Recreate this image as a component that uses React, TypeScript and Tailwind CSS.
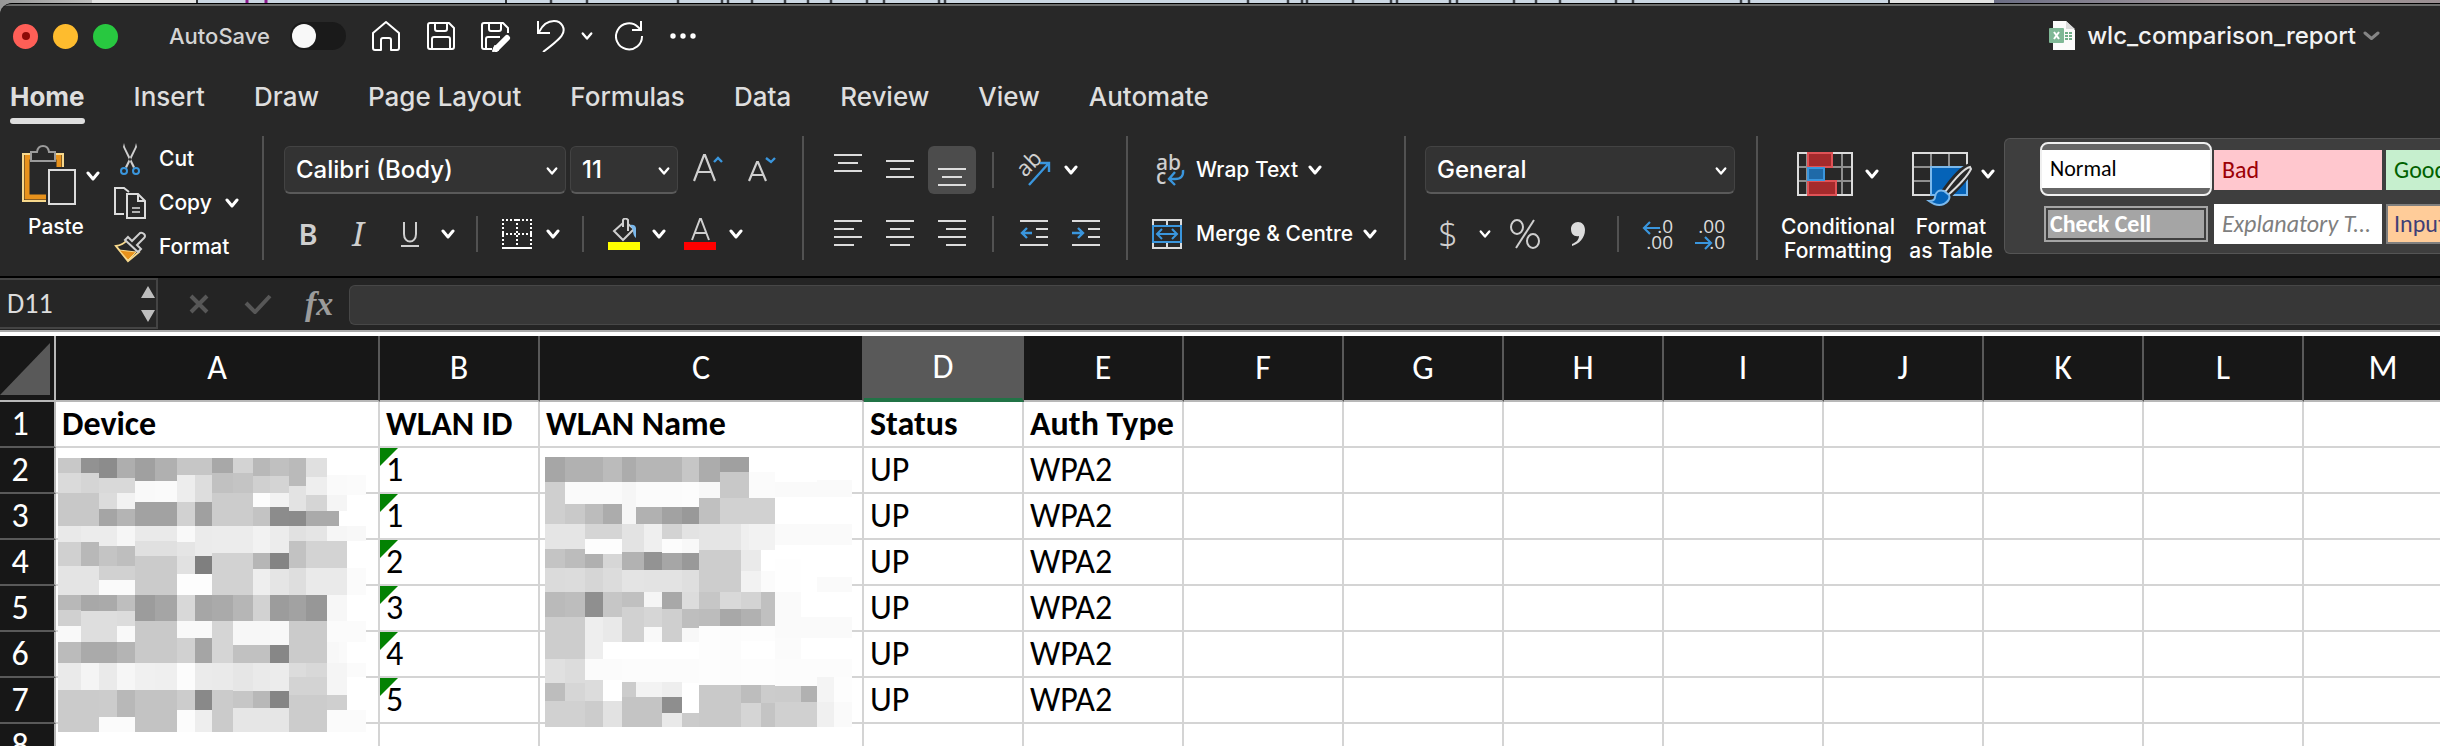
import React from 'react'

/* ---------- shared pieces ---------- */

function Chevron({ size = 'md' }: { size?: 'sm' | 'md' }) {
  return (
    <svg className={size === 'sm' ? 'h-[10px] w-[12px] shrink-0' : 'h-[10px] w-[14px] shrink-0'} viewBox="0 0 14 10" fill="none" stroke="#fff" strokeWidth={size === 'sm' ? 2.7 : 3} strokeLinecap="round" strokeLinejoin="round">
      <path d="M2 2l5 6 5-6" />
    </svg>
  )
}

function IconButton({ label, className, children }: { label: string; className: string; children: React.ReactNode }) {
  return (
    <button type="button" aria-label={label} className={`flex h-12 shrink-0 items-center justify-center ${className}`}>
      {children}
    </button>
  )
}

function Rule({ className = '' }: { className?: string }) {
  return <div className={`h-9 w-[2px] shrink-0 bg-[#525252] ${className}`} />
}

function Divider() {
  return <div className="h-[124px] w-[2px] shrink-0 bg-[#525252]" />
}

function Picker({ label, value, className }: { label: string; value: string; className: string }) {
  return (
    <div className={`relative h-12 shrink-0 ${className}`}>
      <select aria-label={label} defaultValue={value} className="h-12 w-full appearance-none rounded-md border border-b-2 border-[#434343] border-b-[#5a5a5a] bg-[#333333] pl-[11px] text-2xl font-medium text-white">
        <option>{value}</option>
      </select>
      <span className="pointer-events-none absolute top-5 right-[8px]">
        <Chevron size="sm" />
      </span>
    </div>
  )
}

function Lines({ rows, blue }: { rows: [number, number, number][]; blue?: string }) {
  return (
    <svg className="h-8 w-7" viewBox="0 0 28 32" fill="none" stroke="#dcdcdc" strokeWidth="2">
      {rows.map(([x1, x2, y]) => (
        <path key={y} d={`M${x1} ${y}H${x2}`} />
      ))}
      {blue && <path d={blue} stroke="#3a96dd" strokeWidth="2.4" />}
    </svg>
  )
}

/* ---------- title bar ---------- */

function TitleBar() {
  return (
    <header className="flex h-[60px] shrink-0 items-center pl-[13px] pr-[60px]">
      <div className="flex gap-[15px]">
        <button type="button" aria-label="Close" className="flex size-[25px] items-center justify-center rounded-full bg-[#ff5f57]">
          <span className="size-2 rounded-full bg-[#8d0a06]" />
        </button>
        <button type="button" aria-label="Minimise" className="size-[25px] rounded-full bg-[#febc2e]" />
        <button type="button" aria-label="Zoom" className="size-[25px] rounded-full bg-[#28c840]" />
      </div>
      <label className="ml-[51px] flex items-center gap-[20px] text-[22px] font-medium text-[#d4d4d4]">
        <span className="w-[101px] whitespace-nowrap">AutoSave</span>
        <span className="relative h-7 w-14 rounded-full bg-[#1a1a1a]">
          <input type="checkbox" className="absolute inset-0 appearance-none" />
          <span className="pointer-events-none absolute top-[2px] left-[2px] size-6 rounded-full bg-[#f8f8f8]" />
        </span>
      </label>
      <div className="ml-[25px] flex items-center">
        <button type="button" aria-label="Home">
          <svg className="h-8 w-[30px]" viewBox="0 0 30 32" fill="none" stroke="#fff" strokeWidth="2" strokeLinejoin="round">
            <path d="M2 13L15 2l13 11v15q0 2-2 2h-6V20q0-2-2-2h-6q-2 0-2 2v10H4q-2 0-2-2z" />
          </svg>
        </button>
        <button type="button" aria-label="Save" className="ml-[26px]">
          <svg className="h-8 w-[28px]" viewBox="0 0 28 32" fill="none" stroke="#fff" strokeWidth="2" strokeLinejoin="round">
            <path d="M3 3h19l5 5v19q0 2-2 2H3q-2 0-2-2V5q0-2 2-2z M8 3v6q0 2 2 2h8q2 0 2-2V3 M5 29V19q0-2 2-2h14q2 0 2 2v10" />
          </svg>
        </button>
        <button type="button" aria-label="Save as" className="ml-[26px]">
          <svg className="h-8 w-[31px]" viewBox="0 0 31 32" fill="none" stroke="#fff" strokeWidth="2" strokeLinejoin="round">
            <path d="M11 29H3q-2 0-2-2V5q0-2 2-2h19l5 5v5 M8 3v6q0 2 2 2h8q2 0 2-2V3 M5 29V19q0-2 2-2h12" />
            <path d="M26 18L15 29" strokeWidth="6" strokeLinecap="round" />
            <path d="M12 31l2-5 3 4z" fill="#fff" />
          </svg>
        </button>
        <button type="button" aria-label="Undo" className="ml-[25px]">
          <svg className="h-8 w-[28px]" viewBox="0 0 28 32" fill="none" stroke="#fff" strokeWidth="2">
            <path d="M1 1v12h12 M2 12C5 6 10 1 17 1c8 0 12 8 8 14-2 4-11 11-19 17" />
          </svg>
        </button>
        <button type="button" aria-label="Undo history" className="ml-[16px]">
          <Chevron size="sm" />
        </button>
        <button type="button" aria-label="Redo" className="ml-[22px]">
          <svg className="h-8 w-[29px]" viewBox="0 0 29 32" fill="none" stroke="#fff" strokeWidth="2">
            <path d="M27 16a13 13 0 1 1-4-9l3 3 M26 1v9h-9" />
          </svg>
        </button>
        <button type="button" aria-label="More" className="ml-[26px]">
          <svg className="h-2 w-[27px]" viewBox="0 0 27 8" fill="#fff">
            <circle cx="3" cy="4" r="2.700" />
            <circle cx="13" cy="4" r="2.700" />
            <circle cx="23" cy="4" r="2.700" />
          </svg>
        </button>
      </div>
      <button type="button" className="ml-auto flex items-center text-2xl font-medium text-[#f2f2f2]">
        <svg className="mr-[11px] h-[30px] w-[27px]" viewBox="0 0 27 30">
          <path d="M4 0h13l9 9v20H4z" fill="#fbfbfb" />
          <path d="M17 0v8h9z" fill="#dcdcdc" />
          <path d="M16 11h3v2h-3zM20 11h3v2h-3zM16 14h3v2h-3zM20 14h3v2h-3zM16 17h3v2h-3zM20 17h3v2h-3z" fill="#6fae88" />
          <rect y="7" width="15" height="15" rx="1" fill="#7fb896" />
          <path d="M5 11l5 7M10 11l-5 7" stroke="#fff" strokeWidth="2" />
        </svg>
        wlc_comparison_report
        <svg className="ml-[7px] h-[10px] w-[17px]" viewBox="0 0 17 10" fill="none" stroke="#858585" strokeWidth="3" strokeLinecap="round" strokeLinejoin="round">
          <path d="M2 2l6.500 5.500L15 2" />
        </svg>
      </button>
    </header>
  )
}

/* ---------- tabs ---------- */

const tabs = ['Home', 'Insert', 'Draw', 'Page Layout', 'Formulas', 'Data', 'Review', 'View', 'Automate']

function Tabs() {
  return (
    <nav className="flex h-[70px] shrink-0 gap-[49px] pt-[15px] pl-[10px] text-[26px] font-medium text-[#dedede]">
      {tabs.map((tab, i) => (
        <a key={tab} href={'#' + tab.toLowerCase().replace(' ', '-')} className={i === 0 ? 'font-bold whitespace-nowrap' : 'whitespace-nowrap'}>
          <span className="block leading-8">{tab}</span>
          {i === 0 && <span className="mt-[5px] block h-[6px] rounded-full bg-[#dedede]" />}
        </a>
      ))}
    </nav>
  )
}

/* ---------- ribbon ---------- */

function Clipboard() {
  return (
    <section className="flex w-[262px] shrink-0 items-start">
      <button type="button" className="w-[114px] pl-[22px] text-left">
        <span className="mt-2 flex h-[64px] items-center gap-[9px]">
          <svg className="h-[62px] w-[55px]" viewBox="0 0 55 62" fill="none">
            <path d="M8 12H5v40h19M34 12h3v10" stroke="#e8921c" strokeWidth="5" />
            <path d="M8 9H1v47h23M34 9h7v13" stroke="#f8d98c" strokeWidth="2" />
            <path d="M9 7h6c1-8 11-8 12 0h6v9H9z" fill="#282828" stroke="#9b9b9b" strokeWidth="2" />
            <path d="M27 25h26v34H27z" fill="#282828" stroke="#dcdcdc" strokeWidth="2" />
          </svg>
          <Chevron />
        </span>
        <span className="mt-[5px] ml-[6px] block text-[21px] leading-7 font-medium text-white">Paste</span>
      </button>
      <div className="mt-px flex flex-col text-[21px] font-medium text-white">
        <button type="button" className="flex h-11 items-center gap-[13px]">
          <svg className="h-8 w-8" viewBox="0 0 32 32" fill="none">
            <path d="M10 0l1 4 10 20-2 1L9 4z M22 0l-1 4-10 20 2 1L23 4z" fill="#cfcfcf" />
            <circle cx="10" cy="28" r="3" stroke="#3a96dd" strokeWidth="2" />
            <circle cx="22" cy="28" r="3" stroke="#3a96dd" strokeWidth="2" />
          </svg>
          Cut
        </button>
        <button type="button" className="flex h-11 items-center gap-[13px]">
          <svg className="h-8 w-8" viewBox="0 0 32 32" fill="none" stroke="#dcdcdc" strokeWidth="2">
            <path d="M10 27H1V1h9l5 4" />
            <path d="M13 7h11l7 7v17H13z M24 7v7h7" />
            <path d="M18 21h8M18 25h8" stroke="#b0b0b0" />
          </svg>
          <span className="flex items-center gap-[13px]">
            Copy
            <Chevron />
          </span>
        </button>
        <button type="button" className="flex h-11 items-center gap-[13px]">
          <svg className="h-8 w-8" viewBox="0 0 32 32" fill="none">
            <path d="M2 15q7-1 11-6l12 12-11 9z" stroke="#f8d98c" strokeWidth="2" />
            <path d="M5 19l17 2-8 8z" fill="#e8921c" stroke="#f8d98c" />
            <path d="M14 6l4 4 8-8q2-1 4 1t0 4l-7 7 4 4-3 3L11 9z" fill="#282828" stroke="#cfcfcf" strokeWidth="2" />
          </svg>
          Format
        </button>
      </div>
    </section>
  )
}

function FontGroup() {
  return (
    <section className="flex w-[538px] shrink-0 flex-col gap-4 pt-[10px] pl-5">
      <div className="flex">
        <Picker label="Font" value="Calibri (Body)" className="w-[282px]" />
        <Picker label="Font size" value="11" className="ml-1 w-[108px]" />
        <IconButton label="Increase font size" className="ml-2 w-[44px]">
          <svg className="h-8 w-[30px]" viewBox="0 0 30 32" fill="none" stroke="#cfcfcf" strokeWidth="2.200">
            <path d="M1 27L11 1h1l10 26M5 18h13" />
            <path d="M21 8l4-4 4 4" stroke="#3a96dd" strokeWidth="2.400" />
          </svg>
        </IconButton>
        <IconButton label="Decrease font size" className="ml-[10px] w-[44px]">
          <svg className="h-8 w-[28px]" viewBox="0 0 28 32" fill="none" stroke="#cfcfcf" strokeWidth="2.200">
            <path d="M1 27L9 8h1l8 19M4 21h11" />
            <path d="M18 4l5 4 4-4" stroke="#3a96dd" strokeWidth="2.400" />
          </svg>
        </IconButton>
      </div>
      <div className="flex items-center text-[#cfcfcf]">
        <IconButton label="Bold" className="w-[48px]">
          <span className="font-['Noto_Sans',sans-serif] text-[29px] leading-9 font-semibold">B</span>
        </IconButton>
        <IconButton label="Italic" className="w-[52px]">
          <span className="font-['Noto_Serif','Liberation_Serif',serif] text-[32px] leading-9 italic">I</span>
        </IconButton>
        <IconButton label="Underline" className="w-[52px]">
          <svg className="h-7 w-5" viewBox="0 0 20 28" fill="none" stroke="#cfcfcf" strokeWidth="2">
            <path d="M4 2v12c0 10 12 10 12 0V2M1 26h18" />
          </svg>
        </IconButton>
        <IconButton label="Underline options" className="w-[24px]">
          <Chevron />
        </IconButton>
        <Rule className="ml-4" />
        <IconButton label="Borders" className="ml-5 w-[38px]">
          <svg className="h-[30px] w-[30px]" viewBox="0 0 30 30" fill="none" stroke="#fff" strokeWidth="2">
            <path d="M0 1h30M1 0v28M29 0v28M0 15h30M15 0v28" strokeDasharray="2 2" />
            <path d="M0 29h30" />
          </svg>
        </IconButton>
        <IconButton label="Border options" className="w-[34px]">
          <Chevron />
        </IconButton>
        <Rule className="ml-3" />
        <IconButton label="Fill colour" className="ml-5 w-[40px]">
          <svg className="h-8 w-8" viewBox="0 0 32 32" fill="none">
            <path d="M15 5L6 13l9 9 11-11-6-5M15 9V2q2-3 5 0v11" stroke="#cfcfcf" strokeWidth="2" />
            <path d="M22 7q5-1 6 3v10q-3-2-3-8z" fill="#7ab8ec" />
            <path d="M0 24h32v8H0z" fill="#ffff00" />
          </svg>
        </IconButton>
        <IconButton label="Fill options" className="w-[30px]">
          <Chevron />
        </IconButton>
        <IconButton label="Font colour" className="ml-[6px] w-[40px]">
          <svg className="h-8 w-8" viewBox="0 0 32 32" fill="none">
            <path d="M8 22L16 1h1l8 21M11 15h11" stroke="#cfcfcf" strokeWidth="2" />
            <path d="M0 24h32v8H0z" fill="#ff0000" />
          </svg>
        </IconButton>
        <IconButton label="Font colour options" className="w-[32px]">
          <Chevron />
        </IconButton>
      </div>
    </section>
  )
}

function AlignGroup() {
  return (
    <section className="flex w-[322px] shrink-0 flex-col gap-4 pt-[10px] pl-5">
      <div className="flex items-center">
        <IconButton label="Top align" className="w-[48px]">
          <Lines rows={[[0, 28, 1], [4, 24, 9], [0, 28, 17]]} />
        </IconButton>
        <IconButton label="Middle align" className="ml-1 w-[48px]">
          <Lines rows={[[0, 28, 7], [4, 24, 15], [0, 28, 23]]} />
        </IconButton>
        <IconButton label="Bottom align" className="ml-1 w-[48px] rounded-md bg-[#4c4c4c]">
          <Lines rows={[[0, 28, 15], [4, 24, 23], [0, 28, 31]]} />
        </IconButton>
        <Rule className="ml-4" />
        <IconButton label="Orientation" className="ml-4 w-[48px]">
          <svg className="h-[34px] w-[34px] overflow-visible" viewBox="0 0 34 34" fill="none">
            <text x="8" y="25" transform="rotate(-45 8 25)" fontFamily="Noto Sans, sans-serif" fontSize="22" fill="#cfcfcf">ab</text>
            <path d="M12 32L31 11M23 10h9v9" stroke="#3a96dd" strokeWidth="2.400" />
          </svg>
        </IconButton>
        <IconButton label="Orientation options" className="w-[26px]">
          <Chevron />
        </IconButton>
      </div>
      <div className="flex items-center">
        <IconButton label="Align left" className="w-[48px]">
          <Lines rows={[[0, 28, 3], [0, 20, 11], [0, 28, 19], [0, 20, 27]]} />
        </IconButton>
        <IconButton label="Align centre" className="ml-1 w-[48px]">
          <Lines rows={[[0, 28, 3], [4, 24, 11], [0, 28, 19], [4, 24, 27]]} />
        </IconButton>
        <IconButton label="Align right" className="ml-1 w-[48px]">
          <Lines rows={[[0, 28, 3], [8, 28, 11], [0, 28, 19], [8, 28, 27]]} />
        </IconButton>
        <Rule className="ml-4" />
        <IconButton label="Decrease indent" className="ml-4 w-[48px]">
          <Lines rows={[[0, 28, 3], [16, 28, 11], [16, 28, 19], [0, 28, 27]]} blue="M12 15H2M7 10l-5 5 5 5" />
        </IconButton>
        <IconButton label="Increase indent" className="ml-1 w-[48px]">
          <Lines rows={[[0, 28, 3], [16, 28, 11], [16, 28, 19], [0, 28, 27]]} blue="M0 15h11M6 10l5 5-5 5" />
        </IconButton>
      </div>
    </section>
  )
}

function WrapGroup() {
  return (
    <section className="flex w-[276px] shrink-0 flex-col items-start gap-4 pt-[10px] pl-6 text-[21px] font-medium text-white">
      <button type="button" className="flex h-12 items-center whitespace-nowrap">
        <svg className="mr-[12px] h-[34px] w-8 overflow-visible" viewBox="0 0 32 34" fill="none">
          <text x="4" y="17" fontFamily="Noto Sans, sans-serif" fontSize="21" fill="#cfcfcf">ab</text>
          <text x="4" y="31" fontFamily="Noto Sans, sans-serif" fontSize="21" fill="#cfcfcf">c</text>
          <path d="M31 17q1 9-8 9h-6M23 19l-6 7 6 6" stroke="#3a96dd" strokeWidth="2.400" />
        </svg>
        <span className="mr-[10px]">Wrap Text</span>
        <Chevron />
      </button>
      <button type="button" className="flex h-12 items-center whitespace-nowrap">
        <svg className="mr-[14px] h-[30px] w-[30px]" viewBox="0 0 30 30" fill="none" strokeWidth="2">
          <path d="M1 6V1h28v5M1 24v5h28v-5M15 1v5M15 24v5" stroke="#dcdcdc" />
          <path d="M1 7h28v16H1zM5 15h20M10 10l-5 5 5 5M20 10l5 5-5 5" stroke="#3a96dd" />
        </svg>
        <span className="mr-[10px]">Merge &amp; Centre</span>
        <Chevron />
      </button>
    </section>
  )
}

function DecimalIcon({ top, bottom, arrow }: { top: string; bottom: string; arrow: string }) {
  return (
    <svg className="h-8 w-[30px] overflow-visible" viewBox="0 0 30 32" fill="none">
      <text x="30" y="15" textAnchor="end" fontFamily="Liberation Sans Narrow, Open Sans, sans-serif" fontSize="19" fill="#dcdcdc">{top}</text>
      <text x="30" y="31" textAnchor="end" fontFamily="Liberation Sans Narrow, Open Sans, sans-serif" fontSize="19" fill="#dcdcdc">{bottom}</text>
      <path d={arrow} stroke="#3a96dd" strokeWidth="2.200" />
    </svg>
  )
}

function NumberGroup() {
  return (
    <section className="flex w-[350px] shrink-0 flex-col gap-4 pt-[10px] pl-[19px]">
      <Picker label="Number format" value="General" className="w-[310px]" />
      <div className="flex items-center text-[#cfcfcf]">
        <IconButton label="Currency" className="w-[46px]">
          <span className="font-['Noto_Sans',sans-serif] text-[34px] leading-9 font-light">$</span>
        </IconButton>
        <IconButton label="Currency options" className="w-[28px]">
          <Chevron size="sm" />
        </IconButton>
        <IconButton label="Percent" className="w-[52px]">
          <svg className="h-8 w-[30px]" viewBox="0 0 30 32" fill="none" stroke="#cfcfcf" strokeWidth="2">
            <ellipse cx="7" cy="9" rx="6" ry="7" />
            <ellipse cx="23" cy="23" rx="6" ry="7" />
            <path d="M24 2L6 30" />
          </svg>
        </IconButton>
        <IconButton label="Comma style" className="w-[54px]">
          <svg className="h-7 w-4" viewBox="0 0 16 28" fill="#dcdcdc">
            <path d="M8 2c4 0 7 3 7 8 0 8-6 14-13 16v-2c5-2 7-5 7-8-5 1-8-2-8-7 0-4 3-7 7-7z" />
          </svg>
        </IconButton>
        <Rule className="ml-3" />
        <IconButton label="Increase decimals" className="ml-[15px] w-[48px]">
          <DecimalIcon top=".0" bottom=".00" arrow="M17 10H1M7 4l-6 6 6 6" />
        </IconButton>
        <IconButton label="Decrease decimals" className="ml-1 w-[48px]">
          <DecimalIcon top=".00" bottom=".0" arrow="M0 25h16M10 19l6 6-6 6" />
        </IconButton>
      </div>
    </section>
  )
}

function StylesGroup() {
  return (
    <section className="flex min-w-0 flex-1 items-start pl-[20px]">
      <button type="button" className="w-[120px] shrink-0 text-[21px] leading-6 font-medium text-white">
        <span className="flex h-[79px] items-start gap-[12px] pt-4 pl-[19px]">
          <svg className="h-[44px] w-[56px]" viewBox="0 0 56 44" fill="none" strokeWidth="2">
            <path d="M1 15h54M1 29h54M10 1v42M45 1v42" stroke="#8f8f8f" />
            <path d="M1 1h54v42H1z" stroke="#dcdcdc" />
            <path d="M11 1h24v14H11zM11 29h28v14H11z" fill="#a52a2c" stroke="#e05256" />
            <path d="M11 16h16v12H11z" fill="#1f6aa8" stroke="#3a96dd" />
          </svg>
          <span className="pt-[17px]">
            <Chevron />
          </span>
        </span>
        Conditional
        <br />
        Formatting
      </button>
      <button type="button" className="ml-[6px] w-[94px] shrink-0 text-[21px] leading-6 font-medium text-white">
        <span className="flex h-[79px] items-start gap-[9px] pt-4 pl-[8px]">
          <svg className="h-[56px] w-[60px]" viewBox="0 0 60 56" fill="none" strokeWidth="2">
            <path d="M1 15h54M1 29h54M19 1v42M37 1v42" stroke="#8f8f8f" />
            <path d="M20 43H1V1h54v12" stroke="#dcdcdc" />
            <path d="M19 15h36v28H19z" fill="#0563b8" stroke="#7ab8ec" />
            <path d="M58 14q-10 3-26 26l4 4Q55 26 59 17z" fill="#282828" stroke="#282828" strokeWidth="6" />
            <path d="M58 15q-8 2-25 25l3 3Q54 27 59 17z" fill="#282828" stroke="#dcdcdc" />
            <path d="M32 39q-8-2-9 6 0 4-6 4 8 6 15 3 7-4 5-9z" fill="#0563b8" stroke="#7ab8ec" />
          </svg>
          <span className="pt-[17px]">
            <Chevron />
          </span>
        </span>
        Format
        <br />
        as Table
      </button>
      <div className="mt-[2px] ml-[6px] h-[116px] min-w-0 flex-1 overflow-hidden rounded-l-md border border-r-0 border-[#555555] bg-[#3e3e3e] pt-[3px] pl-[35px] font-['Carlito','Lato',sans-serif] text-2xl">
        <div className="flex">
          <button type="button" className="h-[54px] w-[172px] shrink-0 rounded-lg border-2 border-[#f0f0f0] bg-[#666666] py-[6px] text-left text-[22px] text-black">
            <span className="block h-[38px] bg-white pl-[8px] leading-[38px]">Normal</span>
          </button>
          <button type="button" className="mt-2 ml-[2px] h-10 w-[168px] shrink-0 bg-[#ffc7ce] pl-[8px] text-left text-[#9c0006]">Bad</button>
          <button type="button" className="mt-2 ml-1 h-10 w-[168px] shrink-0 bg-[#c6efce] pl-[8px] text-left text-[#006100]">Good</button>
        </div>
        <div className="mt-2 flex">
          <button type="button" className="mt-[2px] ml-1 h-9 w-[164px] shrink-0 border-2 border-[#a5a5a5] bg-[#3f3f3f] p-[2px] text-left font-bold text-white">
            <span className="block h-7 bg-[#a5a5a5] pl-[2px] leading-7">Check Cell</span>
          </button>
          <button type="button" className="ml-[6px] h-10 w-[168px] shrink-0 bg-white pl-[8px] text-left whitespace-nowrap text-[#7f7f7f] italic">Explanatory T...</button>
          <button type="button" className="ml-1 h-10 w-[168px] shrink-0 border-2 border-[#7f7f7f] bg-[#ffcc99] pl-[6px] text-left text-[#3f3f76]">Input</button>
        </div>
      </div>
    </section>
  )
}

/* ---------- formula bar ---------- */

function FormulaBar() {
  return (
    <div className="flex h-[54px] shrink-0 border-t-2 border-black bg-[#242424]">
      <div className="flex h-[51px] w-[158px] shrink-0 items-center justify-between border-2 border-l-0 border-[#444444] bg-[#262626] pr-[1px]">
        <input aria-label="Name box" defaultValue="D11" className="w-[100px] bg-transparent pl-[7px] font-['Carlito','Lato',sans-serif] text-[28px] leading-9 text-[#dcdcdc]" />
        <svg className="h-[38px] w-[14px]" viewBox="0 0 14 38" fill="#bdbdbd">
          <path d="M7 1l7 12H0zM7 37l7-12H0z" />
        </svg>
      </div>
      <button type="button" aria-label="Cancel" className="ml-[31px] shrink-0">
        <svg className="h-5 w-5" viewBox="0 0 20 20" fill="none" stroke="#575757" strokeWidth="4">
          <path d="M2 2l16 16M18 2L2 18" />
        </svg>
      </button>
      <button type="button" aria-label="Enter" className="ml-[35px] shrink-0">
        <svg className="h-5 w-7" viewBox="0 0 28 20" fill="none" stroke="#575757" strokeWidth="4">
          <path d="M2 9l9 9L26 2" />
        </svg>
      </button>
      <button type="button" aria-label="Insert function" className="ml-[33px] w-[44px] shrink-0 pb-1 text-left font-['Liberation_Serif',serif] text-[34px] font-bold text-[#9b9b9b] italic">
        fx
      </button>
      <input aria-label="Formula" className="mt-[7px] h-10 min-w-0 flex-1 rounded-l-md border border-r-0 border-[#474747] bg-[#373737] px-3 text-white" />
    </div>
  )
}

/* ---------- sheet ---------- */

/* One entry per mosaic column: left, right, then "top shade" pairs. */
type Strip = [number, number, string]

const deviceMosaic: Strip[] = [
  [162, 227, '414 c8 459 da 519 c8 617 e9 666 d0 738 e4 825 b8 870 d0 918 f9 966 bb 1029 ea 1110 cb'],
  [227, 277, '414 92 459 d5 519 c8 617 ec 666 b8 738 e4 825 a8 873 de 966 aa 1029 f4 1110 cb'],
  [277, 327, '414 8c 473 d9 519 dc 567 a5 617 ec 678 c4 738 d1 780 fa 825 aa 873 de 966 aa 1029 ea 1110 cc 1191 fb'],
  [327, 378, '414 ae 473 d9 519 f2 567 b4 617 f6 678 be 738 d1 780 fa 825 be 873 dc 918 f9 966 b4 1029 f6 1110 b8 1191 fb'],
  [378, 434, '414 a0 483 f9 546 a2 617 ea 663 e0 708 cb 825 9c 903 c9 1029 f0 1110 c3'],
  [434, 496, '414 b0 483 fa 546 a2 617 ea 663 e0 708 cb 825 a5 903 c9 1029 ef 1110 c3'],
  [496, 546, '414 c6 465 ed 546 d1 617 f9 666 e5 708 e1 762 fd 825 d8 903 f9 954 d1 1029 fc 1110 cc 1170 fc'],
  [546, 594, '414 c6 465 dd 546 a0 617 eb 708 7f 762 fd 825 a6 903 f9 954 a5 1029 eb 1110 89 1170 ee'],
  [594, 651, '414 a8 459 c1 519 cc 617 ec 699 d2 825 aa 903 d5 1029 ea 1110 cb'],
  [651, 708, '414 d3 459 c4 519 cc 617 ec 699 d2 825 b6 903 f7 975 c1 1029 e6 1113 c6 1164 e6'],
  [708, 755, '414 b8 467 d0 519 fc 561 c3 617 f2 699 b6 747 ee 825 d2 903 f7 975 c1 1029 ea 1113 b8 1164 e6'],
  [755, 809, '414 c0 467 d4 519 f2 561 8c 617 ec 699 84 747 e5 825 9c 903 f8 975 87 1029 ec 1113 85 1164 e6'],
  [809, 857, '414 ba 497 e3 573 8b 617 e1 663 c2 744 de 825 a2 903 cb 1029 dc 1072 d3 1125 cc'],
  [857, 917, '414 e0 471 ee 525 d5 573 aa 617 e5 663 d3 744 ea 825 97 903 cb 1029 d8 1072 d3 1125 cc'],
  [917, 949, '414 ff 465 fa 525 f5 573 aa 617 f6 663 d3 744 ea 825 f7 903 fb 966 f8 1029 f5 1125 cf 1170 fb'],
  [949, 972, '414 ff 465 fa 525 f5 573 ff 617 f6 663 d3 744 ea 825 f7 903 fb 966 fa 1029 f5 1125 cf 1170 fb'],
  [972, 1025, '414 ff 465 fb 525 ff 617 f8 663 ff 744 fb 825 ff 903 fb 966 ff 1029 fb 1072 ff 1170 fb'],
]

const nameMosaic: Strip[] = [
  [36, 83, '411 a6 486 cf 612 e5 687 c4 744 db 816 ba 891 cd 1017 e0 1089 bd 1143 d1'],
  [83, 132, '411 b1 486 fa 552 c9 612 e5 687 bc 744 dc 816 bd 891 cd 1017 dc 1089 d6 1143 d1'],
  [132, 173, '411 b1 486 fa 552 bc 612 d5 657 fd 702 b0 744 d6 816 8f 891 ee 1017 fb 1080 dc 1143 cc'],
  [173, 219, '411 bb 486 fa 552 ac 612 d5 657 fd 702 d6 744 dc 816 c6 891 e9 966 ff 1017 fb 1080 ff 1143 e2'],
  [219, 252, '411 ac 486 f6 612 e3 696 b2 750 e4 816 c0 861 d1 966 ff 1017 fc 1086 cc 1131 c4'],
  [252, 271, '411 b6 486 fb 561 b1 612 e3 696 b2 750 e4 816 c0 861 d1 966 ff 1017 fc 1086 f3 1131 c4'],
  [271, 314, '411 b6 486 fb 561 b1 612 ef 696 93 750 e3 816 f5 861 d6 921 f9 966 ff 1017 fc 1086 f3 1131 c4'],
  [314, 361, '411 b6 486 fb 561 a2 612 d3 657 fc 699 a6 750 e3 816 a8 867 cf 966 ff 1017 fc 1086 ee 1131 8e 1179 e9'],
  [361, 402, '411 c6 486 fc 561 99 612 e3 657 f8 699 99 750 df 816 dc 867 be 924 f8 966 ff 1017 fc 1089 ff 1179 cb'],
  [402, 452, '411 ac 486 f8 534 c0 612 e5 690 cd 816 c6 867 bc 918 fd 1095 c9'],
  [452, 501, '411 a0 456 c8 534 d1 612 e5 690 cd 816 d9 867 a8 918 fc 1095 c9'],
  [501, 520, '411 a0 456 c8 534 d1 612 ef 690 ea 753 f2 816 d3 867 b1 918 fd 963 ff 1017 fd 1095 bd 1149 d5'],
  [520, 549, '411 ff 456 fb 534 d1 612 f2 690 ea 753 f2 816 d3 867 b1 918 fd 963 ff 1017 fd 1095 bd 1149 d5'],
  [549, 582, '411 ff 456 fb 534 d1 612 f2 690 ff 753 fb 816 c0 918 fd 963 ff 1017 fd 1095 cc 1149 c4'],
  [582, 645, '411 ff 486 fa 531 ff 612 fa 675 ff 717 fe 816 fa 954 fb 1017 fc 1098 cb 1146 d0'],
  [645, 682, '411 ff 486 fa 531 ff 612 fa 675 ff 891 fa 954 ff 1017 fc 1098 b1 1146 d0'],
  [682, 722, '411 ff 480 fa 531 ff 612 fa 675 ff 771 fa 816 ff 891 fa 954 ff 1017 fc 1071 f4 1146 f0'],
  [722, 765, '411 ff 480 fa 531 ff 612 fa 675 ff 771 fa 816 ff 891 fa 954 ff 1017 fc 1071 fd 1146 fa'],
]

function Mosaic({ strips, bottom, viewBox, className }: { strips: Strip[]; bottom: number; viewBox: string; className: string }) {
  return (
    <svg className={`absolute ${className}`} viewBox={viewBox} preserveAspectRatio="none" shapeRendering="crispEdges" aria-hidden="true">
      {strips.map(([left, right, spec]) => {
        const parts = spec.split(' ')
        return parts.map((part, i) => {
          if (i % 2 === 1) return null
          const top = Number(part)
          const end = i + 2 < parts.length ? Number(parts[i + 2]) : bottom
          const shade = parts[i + 1]
          return <rect key={`${left}-${top}`} x={left} y={top} width={right - left} height={end - top} fill={`#${shade}${shade}${shade}`} />
        })
      })}
    </svg>
  )
}

const columns = ['A', 'B', 'C', 'D', 'E', 'F', 'G', 'H', 'I', 'J', 'K', 'L', 'M']
const records = [1, 1, 2, 3, 4, 5].map((id) => ['', String(id), '', 'UP', 'WPA2'])
const sheetRows = [['Device', 'WLAN ID', 'WLAN Name', 'Status', 'Auth Type'], ...records, []]

function Sheet() {
  return (
    <div className="relative min-h-0 flex-1 overflow-hidden border-t-2 border-[#a8a8a8] bg-white pt-[4px] font-['Carlito','Lato',sans-serif]">
      <table className="w-[2464px] table-fixed border-separate border-spacing-0 text-black">
        <colgroup>
          <col className="w-[56px]" />
          {columns.map((c) => (
            <col key={c} className={c === 'A' || c === 'C' ? 'w-[324px]' : 'w-[160px]'} />
          ))}
        </colgroup>
        <thead>
          <tr className="h-[66px] text-[34px] leading-9 text-white">
            <th aria-label="Select all" className="border-r-2 border-b-2 border-[#b8b8b8] bg-[#171717] p-0">
              <svg className="mt-[2px] h-[52px] w-[50px]" viewBox="0 0 50 52">
                <path d="M0 52L50 0v52z" fill="#595959" />
              </svg>
            </th>
            {columns.map((c) => (
              <th
                key={c}
                className={
                  c === 'D'
                    ? 'border-r-2 border-b-4 border-r-[#595959] border-b-[#217346] bg-[#595959] p-0 font-normal'
                    : 'border-r-2 border-b-2 border-r-[#595959] border-b-[#b8b8b8] bg-[#171717] p-0 font-normal'
                }
              >
                {c}
              </th>
            ))}
          </tr>
        </thead>
        <tbody>
          {sheetRows.map((row, r) => (
            <tr key={r} className="h-[46px] text-[34px] leading-10">
              <th className="border-r-2 border-b-2 border-r-[#b8b8b8] border-b-[#595959] bg-[#171717] p-0 pr-[14px] font-normal text-white">{r + 1}</th>
              {columns.map((c, i) => (
                <td key={c} className={`relative border-r-2 border-b-2 border-[#d4d4d4] py-0 pr-0 pl-[6px] whitespace-nowrap ${r === 0 ? 'font-bold' : ''}`}>
                  {c === 'B' && row[i] && r > 0 && (
                    <svg className="absolute top-0 left-0 h-[18px] w-[18px]" viewBox="0 0 18 18">
                      <path d="M0 0h18L0 18z" fill="#038203" />
                    </svg>
                  )}
                  <span className="relative">{row[i] ?? ''}</span>
                </td>
              ))}
            </tr>
          ))}
        </tbody>
      </table>
      <Mosaic strips={deviceMosaic} bottom={1236} viewBox="162 414 863 822" className="top-[126px] left-[58px] h-[274px] w-[308px]" />
      <Mosaic strips={nameMosaic} bottom={1221} viewBox="36 411 729 810" className="top-[125px] left-[545px] h-[270px] w-[307px]" />
    </div>
  )
}

/* ---------- window behind the workbook ---------- */

const darkMarks = [551, 587, 678, 722, 728, 752, 785, 808, 831, 867, 884, 939, 945, 1248, 1288, 1302, 1307, 1353, 1391, 1397, 1450, 1457, 1514, 1536, 1560, 1616, 1633, 1741, 1749]

function Backdrop() {
  return (
    <div className="absolute inset-x-0 top-0 flex h-4">
      <div className="w-[92px] shrink-0 bg-linear-to-r from-[#969696] to-[#bdbdbd]" />
      <div className="w-[104px] shrink-0 bg-[#e2e2e2]" />
      <svg className="h-4 w-[1694px] shrink-0 bg-[#cbd7e3]" viewBox="196 0 1694 16">
        <path d="M197 0v16M506 0v16M1889 0v16" stroke="#000" strokeWidth="1.500" />
        <path d="M247 0v3M266 0v3" stroke="#8b1a8b" strokeWidth="3" />
        {darkMarks.map((x) => (
          <path key={x} d={`M${x} 0v3`} stroke="#3c4046" strokeWidth="2.500" />
        ))}
      </svg>
      <div className="w-[104px] shrink-0 bg-[#e2e2e2]" />
      <div className="flex-1 bg-linear-to-r from-[#6b6d84] via-[#a59a9c] to-[#9a8f92]" />
    </div>
  )
}

export default function App() {
  return (
    <div className="relative h-screen overflow-hidden pt-[3px] font-['Inter',sans-serif]">
      <Backdrop />
      <div className="relative flex h-full flex-col overflow-hidden rounded-tl-xl border-t border-black bg-[#282828]">
        <div className="h-[2px] shrink-0 bg-[#6c6d6c]" />
        <TitleBar />
        <Tabs />
        <div className="flex h-[140px] shrink-0">
          <Clipboard />
          <Divider />
          <FontGroup />
          <Divider />
          <AlignGroup />
          <Divider />
          <WrapGroup />
          <Divider />
          <NumberGroup />
          <Divider />
          <StylesGroup />
        </div>
        <FormulaBar />
        <Sheet />
      </div>
    </div>
  )
}
